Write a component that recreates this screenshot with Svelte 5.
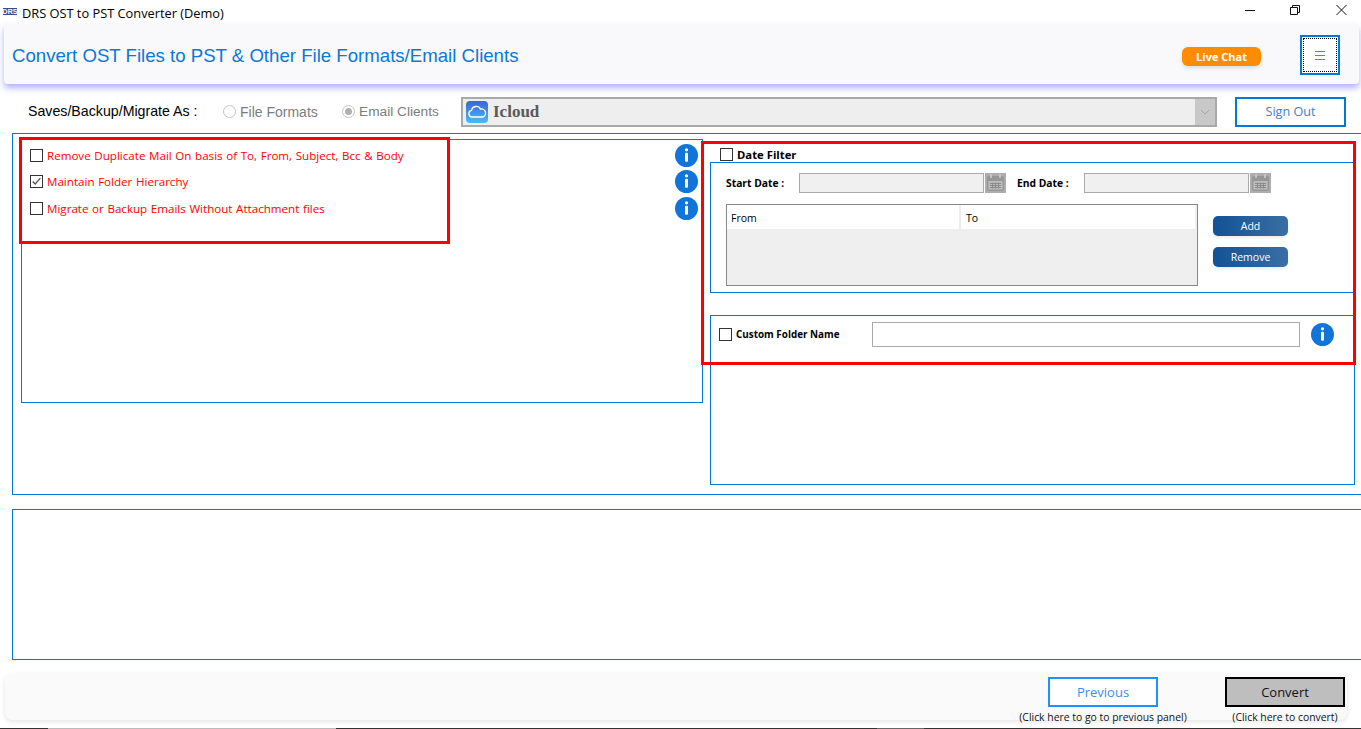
<script>
  const rows = [
    { label: 'Remove Duplicate Mail On basis of To, From, Subject, Bcc & Body', checked: false },
    { label: 'Maintain Folder Hierarchy', checked: true },
    { label: 'Migrate or Backup Emails Without Attachment files', checked: false }
  ];
</script>

{#snippet info()}
  <svg class="info" viewBox="0 0 23 23" width="23" height="23" aria-hidden="true">
    <circle cx="11.5" cy="11.5" r="11.5" fill="#1174d8" />
    <circle cx="11.5" cy="5.8" r="1.6" fill="#fff" />
    <rect x="10" y="8.8" width="3" height="9" rx="1" fill="#fff" />
  </svg>
{/snippet}

{#snippet cal()}
  <svg class="cal" viewBox="0 0 21 20" width="21" height="20" aria-hidden="true">
    <rect width="21" height="20" fill="#adadad" />
    <rect x="2" y="3" width="17" height="15" rx="2" fill="#969696" />
    <rect x="3.5" y="8" width="14" height="8.5" fill="#bdbdbd" />
    <rect x="5" y="1" width="2" height="4" fill="#c4c4c4" />
    <rect x="14" y="1" width="2" height="4" fill="#c4c4c4" />
    <path d="M5 10.500h11M5 12.500h11M5 14.500h11M7.500 9.500v6M10.500 9.500v6M13.500 9.500v6" stroke="#8a8a8a" stroke-width="1" fill="none" />
  </svg>
{/snippet}

<div class="app">
  <div class="titlebar">
    <svg class="logo" viewBox="0 0 14 7" width="14" height="7" aria-hidden="true">
      <rect width="14" height="7" fill="#3a4d86" />
      <text x="7" y="6.200" text-anchor="middle" font-size="7" font-weight="700" font-family="Liberation Sans, sans-serif" fill="#fff">DRS</text>
    </svg>
    <span class="apptitle">DRS OST to PST Converter (Demo)</span>
    <div class="winbtns">
      <svg viewBox="0 0 12 12" width="12" height="12" aria-hidden="true"><path d="M1 6.500h10" stroke="#111" stroke-width="1" fill="none" /></svg>
      <svg viewBox="0 0 12 12" width="12" height="12" aria-hidden="true"><path d="M.5 3.500h7v7h-7zM2.500 3.500v-2h7v7h-2" stroke="#111" stroke-width="1" fill="none" /></svg>
      <svg viewBox="0 0 12 12" width="12" height="12" aria-hidden="true"><path d="M.5 1l10 10M10.500 1l-10 10" stroke="#111" stroke-width="1" fill="none" /></svg>
    </div>
  </div>

  <header class="header">
    <h1>Convert OST Files to PST &amp; Other File Formats/Email Clients</h1>
    <button class="chat">Live Chat</button>
    <button class="menu" aria-label="Menu"><span class="dots"><i></i><i></i><i></i></span></button>
  </header>

  <div class="saves">
    <span class="saves-label">Saves/Backup/Migrate As :</span>
    <span class="radio first"><span class="dot"></span>File Formats</span>
    <span class="radio second"><span class="dot on"></span>Email Clients</span>
    <div class="combo">
      <svg viewBox="0 0 22 22" width="22" height="22" aria-hidden="true">
        <defs><linearGradient id="ic" x1="0" y1="0" x2="0" y2="1"><stop offset="0" stop-color="#3f63d8" /><stop offset="1" stop-color="#49bdf2" /></linearGradient></defs>
        <rect width="22" height="22" rx="4" fill="url(#ic)" />
        <path d="M6 16a3.400 3.400 0 0 1-.5-6.700 4.800 4.800 0 0 1 9-1.200A4 4 0 0 1 16.500 16z" fill="none" stroke="#fff" stroke-width="1.300" />
      </svg>
      <span class="combo-text">Icloud</span>
      <span class="combo-arrow">
        <svg viewBox="0 0 10 6" width="10" height="6" aria-hidden="true"><path d="M1 1l4 4 4-4" stroke="#a5a5a5" fill="none" /></svg>
      </span>
    </div>
    <button class="signout">Sign Out</button>
  </div>

  <section class="main">
    <div class="leftbox">
      {#each rows as r}
        <div class="row">
          <span class="check">
            {#if r.checked}
              <svg viewBox="0 0 13 13" width="11" height="11" aria-hidden="true"><path d="M2 6.500l3 3 6-7" stroke="#555" stroke-width="1.600" fill="none" /></svg>
            {/if}
          </span>
          <span class="redlabel">{r.label}</span>
          {@render info()}
        </div>
      {/each}
    </div>

    <div class="rightcol">
      <div class="datehead"><span class="check"></span><b>Date Filter</b></div>
      <div class="datebox">
        <div class="daterow">
          <b class="lbl start">Start Date :</b>
          <span class="dateinput w1"></span>
          {@render cal()}
          <b class="lbl end">End Date :</b>
          <span class="dateinput w2"></span>
          {@render cal()}
        </div>
        <div class="tablerow">
          <div class="table">
            <div class="thead"><span class="th1">From</span><span class="th2">To</span></div>
          </div>
          <div class="tbtns">
            <button class="blue">Add</button>
            <button class="blue">Remove</button>
          </div>
        </div>
      </div>
      <div class="custombox">
        <div class="customrow">
          <span class="check"></span>
          <b class="customlbl">Custom Folder Name</b>
          <span class="custominput"></span>
          {@render info()}
        </div>
      </div>
    </div>
  </section>

  <section class="log"></section>

  <footer class="footer">
    <div class="group prev">
      <button class="previous">Previous</button>
      <span class="hint">(Click here to go to previous panel)</span>
    </div>
    <div class="group conv">
      <button class="convert">Convert</button>
      <span class="hint">(Click here to convert)</span>
    </div>
  </footer>

  <div class="taskbar"></div>

  <div class="mark mark-left"></div>
  <div class="mark mark-right"></div>
</div>

<style>
  :global(body) { margin: 0; background: #fff; }
  .app {
    position: relative; width: 1361px; height: 729px; overflow: hidden; background: #fff;
    display: flex; flex-direction: column; font-family: "Open Sans", "Liberation Sans", sans-serif; color: #000;
  }
  button { font-family: inherit; cursor: pointer; padding: 0; }

  .titlebar { height: 24px; display: flex; align-items: center; padding-left: 3px; flex: none; }
  .logo { margin-top: -2px; }
  .apptitle { margin-left: 5px; font-size: 12.800px; margin-top: 1px; }
  .winbtns { margin-left: auto; display: flex; gap: 34px; margin-right: 13px; margin-top: -4px; }

  .header {
    flex: none; height: 60px; margin: 0 2px 0 4px; background: #f9f9fb; border-radius: 4px;
    box-shadow: 0 4px 6px rgba(100, 100, 255, .5); display: flex; align-items: center; padding-left: 8px;
  }
  h1 { margin: 3px 0 0; font: 400 18.640px "Liberation Sans", sans-serif; color: #0a78d7; }
  .chat {
    margin-left: auto; width: 79px; height: 19px; border: 0; border-radius: 6px; background: #ff8c00; color: #fff;
    font-size: 11px; font-weight: 700; box-shadow: 0 2px 4px rgba(0,0,0,.12); margin-top: 5px;
  }
  .menu {
    width: 40px; height: 40px; margin-left: 39px; margin-right: 19px; border: 2px solid #0078d7; background: #fff;
    display: flex; padding: 1px; margin-top: 2px; box-sizing: border-box;
  }
  .dots {
    flex: 1; border: 1px dotted #000; display: flex; flex-direction: column; align-items: center; justify-content: center; gap: 3px;
  }
  .dots i { display: block; width: 10px; height: 1px; background: #3a8ad8; }

  .saves { flex: none; height: 31px; margin-top: 12px; display: flex; align-items: center; font-size: 13px; }
  .saves-label { margin: -1px 0 0 28px; width: 195px; font: 14.200px "Liberation Sans", sans-serif; }
  .radio { display: flex; align-items: center; gap: 4px; color: #7c7c7c; font-size: 14px; font-family: "Liberation Sans", sans-serif; }
  .radio.first { width: 119px; }
  .radio.second { width: 119px; gap: 4px; font-size: 13.700px; }
  .dot { width: 11px; height: 11px; border: 1px solid #c4c4c4; border-radius: 50%; background: #fff; display: block; position: relative; }
  .dot.on::after { content: ""; position: absolute; inset: 2px; border-radius: 50%; background: #b0b0b0; }
  .combo {
    box-sizing: border-box; width: 756px; height: 30px; border: 2px solid #a9a9a9; background: #eee;
    display: flex; align-items: center; padding-left: 3px;
  }
  .combo-text { margin-left: 5px; font: 700 17px "Liberation Serif", serif; color: #5a5a5a; }
  .combo-arrow { margin-left: auto; width: 20px; align-self: stretch; background: #c8c8c8; display: flex; align-items: center; justify-content: center; }
  .signout {
    box-sizing: border-box; margin-left: 18px; width: 111px; height: 30px; border: 2px solid #0078d7; background: #fff;
    color: #3a80d8; font-size: 12.600px; padding-bottom: 1px;
  }

  .main {
    flex: none; box-sizing: border-box; height: 362px; margin-top: 6px; margin-left: 12px; width: 1349px;
    border: 1px solid #0078d7; border-right: 0; display: flex; padding: 5px 0 0 8px; gap: 7px;
  }
  .leftbox { box-sizing: border-box; width: 682px; height: 264px; border: 1px solid #0078d7; padding: 2.500px 4px 0 8px; }
  .row { display: flex; align-items: center; height: 26px; }
  .row:nth-child(3) { margin-top: 1px; }
  .check {
    flex: none; box-sizing: border-box; width: 13px; height: 13px; border: 1px solid #333; background: #fff;
    display: flex; align-items: center; justify-content: center;
  }
  .redlabel { margin-left: 4px; color: #f00; font-size: 11.600px; word-spacing: .6px; flex: 1; }

  .rightcol { width: 645px; flex: none; }
  .datehead { height: 17px; margin-top: 6px; display: flex; align-items: center; gap: 4px; padding-left: 10px; font-size: 11.300px; }
  .datehead .check { margin-top: 1px; }
  .datehead b { margin-top: 1px; }
  .datebox { box-sizing: border-box; height: 131px; border: 1px solid #0078d7; border-right: 0; }
  .daterow { display: flex; align-items: center; height: 20px; margin-top: 10px; font-size: 10px; }
  .lbl { font-size: 10.300px; }
  .start { margin-left: 15px; width: 73px; }
  .end { margin-left: 11px; width: 67px; }
  .dateinput { box-sizing: border-box; display: block; height: 20px; background: #f0f0f0; border: 1px solid #aaa; margin-right: 1px; }
  .w1 { width: 185px; }
  .w2 { width: 165px; }
  .tablerow { display: flex; margin: 11px 0 0 15px; }
  .table { box-sizing: border-box; width: 472px; height: 82px; border: 1px solid #888; background: #efefef; padding-right: 2px; }
  .thead { height: 24px; background: #fff; display: flex; font-size: 10.500px; line-height: 26px; }
  .th1 { width: 228px; padding-left: 4px; border-right: 2px solid #eee; box-sizing: content-box; margin-right: 5px; }
  .tbtns { margin-left: 15px; margin-top: 12px; display: flex; flex-direction: column; gap: 11px; }
  .blue {
    width: 75px; height: 20px; border: 0; border-radius: 5px; color: #fff; font-size: 10.500px;
    background: linear-gradient(90deg, #135294, #3a6ea5); box-shadow: 0 2px 3px rgba(0,0,0,.08);
  }
  .custombox { box-sizing: border-box; height: 170px; margin-top: 22px; border: 1px solid #0078d7; }
  .customrow { display: flex; align-items: center; padding: 6px 0 0 8px; height: 25px; }
  .customlbl { margin: -1px 0 0 4px; width: 136px; font-size: 9.900px; }
  .custominput { box-sizing: border-box; display: block; width: 428px; height: 25px; border: 1px solid #aaa; background: #fff; margin-right: 11px; }

  .log { flex: none; box-sizing: border-box; height: 151px; width: 1349px; margin: 14px 0 0 12px; border: 1px solid #0078d7; border-right: 0; }

  .footer {
    flex: none; box-sizing: border-box; height: 47px; margin: 13px 0 0 5px; width: 1342px; background: #fafafa;
    border-radius: 7px; box-shadow: 0 2px 5px rgba(0,0,0,.1); display: flex; padding-top: 4px;
  }
  .group { display: flex; flex-direction: column; align-items: center; }
  .prev { margin-left: auto; width: 180px; }
  .conv { margin-left: 32px; width: 120px; margin-right: 2px; }
  .previous, .convert { box-sizing: border-box; height: 30px; font-size: 13px; flex: none; }
  .previous { width: 110px; border: 2px solid #1e90ff; background: #fff; color: #3c8de8; }
  .convert { width: 120px; border: 2px solid #000; background: #bebebe; color: #111; }
  .hint { font-size: 10.400px; margin-top: 3px; line-height: 14px; white-space: nowrap; color: #111; }

  .taskbar {
    position: absolute; left: 0; right: 0; bottom: 0; height: 1px;
    background: linear-gradient(90deg, #333 48px, #bbb 48px, #bbb 336px, #333 336px, #333 877px, #666 877px, #666 924px, #333 924px);
  }

  .mark { position: absolute; box-sizing: border-box; border: 3px solid #f00; pointer-events: none; }
  .mark-left { left: 19px; top: 137px; width: 431px; height: 107px; }
  .mark-right { left: 701px; top: 141px; width: 655px; height: 224px; }
</style>
